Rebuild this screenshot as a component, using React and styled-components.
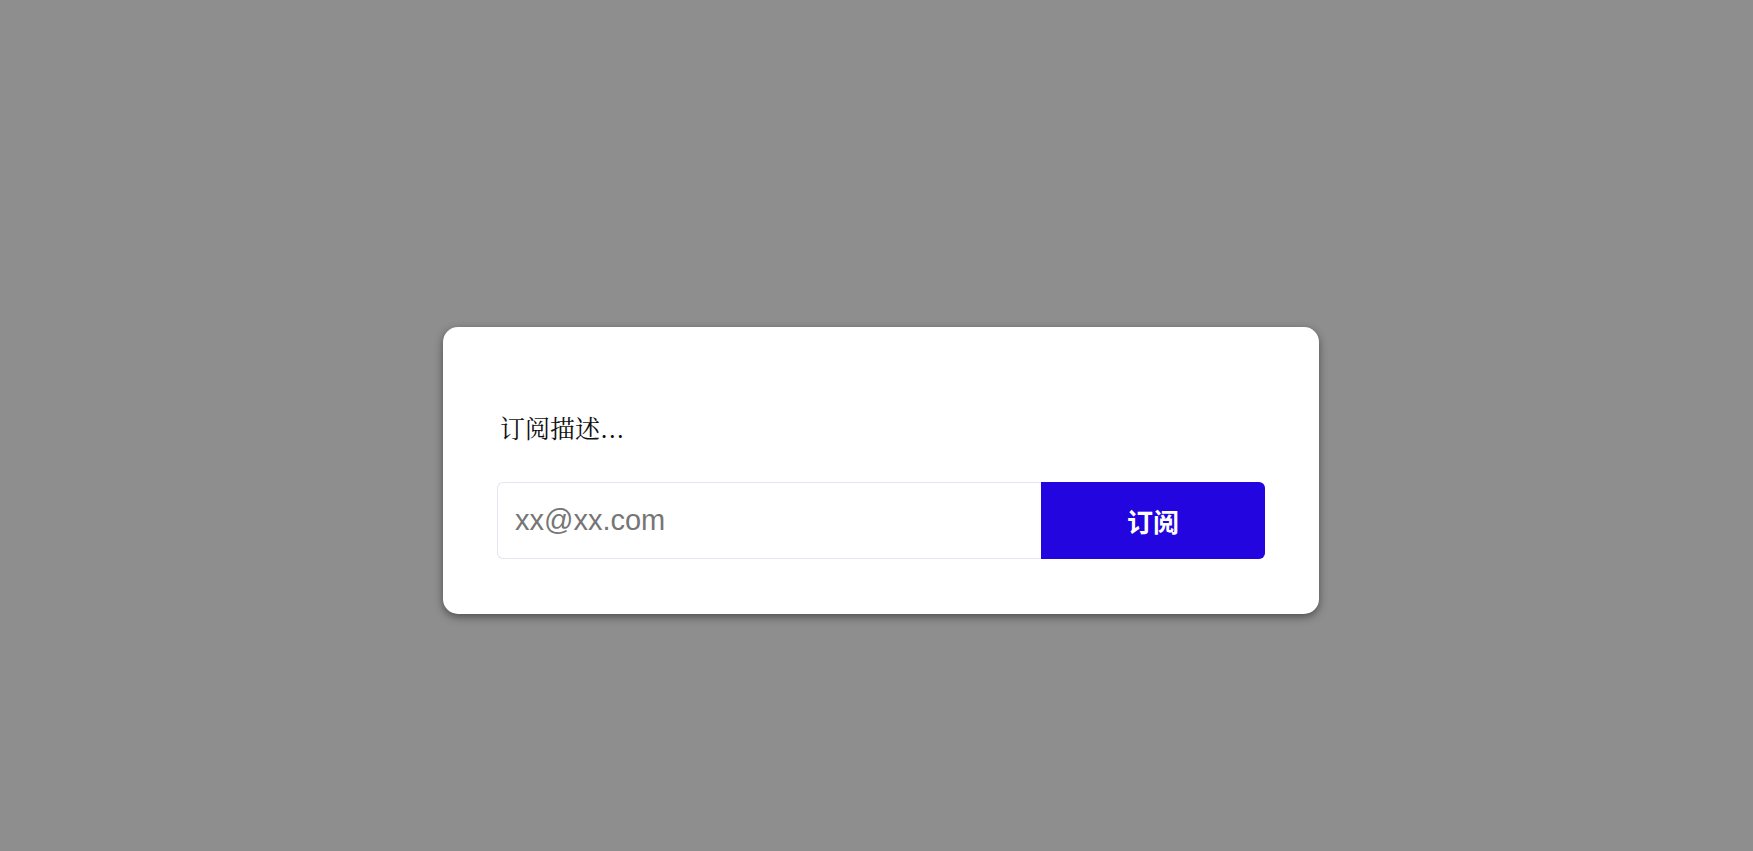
import React, { useState } from "react";
import styled, { createGlobalStyle } from "styled-components";

const GlobalStyle = createGlobalStyle`
  html, body {
    margin: 0;
    padding: 0;
    background: #8e8e8e;
    font-family: "Liberation Sans", "Noto Sans CJK SC", sans-serif;
  }
`;

function App() {
  const [email, setEmail] = useState("");

  const onSubmit = e => {
    e.preventDefault();
  };

  return (
    <Page>
      <GlobalStyle />
      <Card>
        <Description>订阅描述...</Description>
        <SubscribeForm onSubmit={onSubmit}>
          <EmailInput
            type="email"
            name="email"
            value={email}
            onChange={e => setEmail(e.target.value)}
            placeholder="xx@xx.com"
          />
          <SubscribeButton type="submit">订阅</SubscribeButton>
        </SubscribeForm>
      </Card>
    </Page>
  );
}

const Page = styled.div`
  min-height: 851px;
  box-sizing: border-box;
  display: flex;
  justify-content: center;
  align-items: flex-start;
  padding: 327px 0 0 9px;
`;
const Card = styled.div`
  width: 876px;
  box-sizing: border-box;
  background: #ffffff;
  border-radius: 15px;
  padding: 82px 54px 55px;
  box-shadow: 0 3px 8px rgba(0, 0, 0, 0.45);
`;
const Description = styled.p`
  margin: 0 0 37px 3px;
  font-family: "Noto Serif CJK SC", "Noto Sans CJK SC", serif;
  font-size: 25px;
  line-height: 36px;
  color: #111;
`;
const SubscribeForm = styled.form`
  display: flex;
  height: 77px;
`;
const EmailInput = styled.input`
  flex: 1;
  min-width: 0;
  box-sizing: border-box;
  height: 100%;
  border: 1px solid #e6e4f0;
  border-right: none;
  border-radius: 6px 0 0 6px;
  padding: 0 17px;
  font-family: "Liberation Sans", sans-serif;
  font-size: 29px;
  color: #333;
  outline: none;
  &::placeholder {
    color: #767676;
  }
`;
const SubscribeButton = styled.button`
  width: 224px;
  height: 100%;
  border: none;
  border-radius: 0 6px 6px 0;
  background: #2205df;
  color: #ffffff;
  font-family: "Noto Sans CJK SC", sans-serif;
  font-weight: 700;
  font-size: 26px;
  cursor: pointer;
`;

export default App;
